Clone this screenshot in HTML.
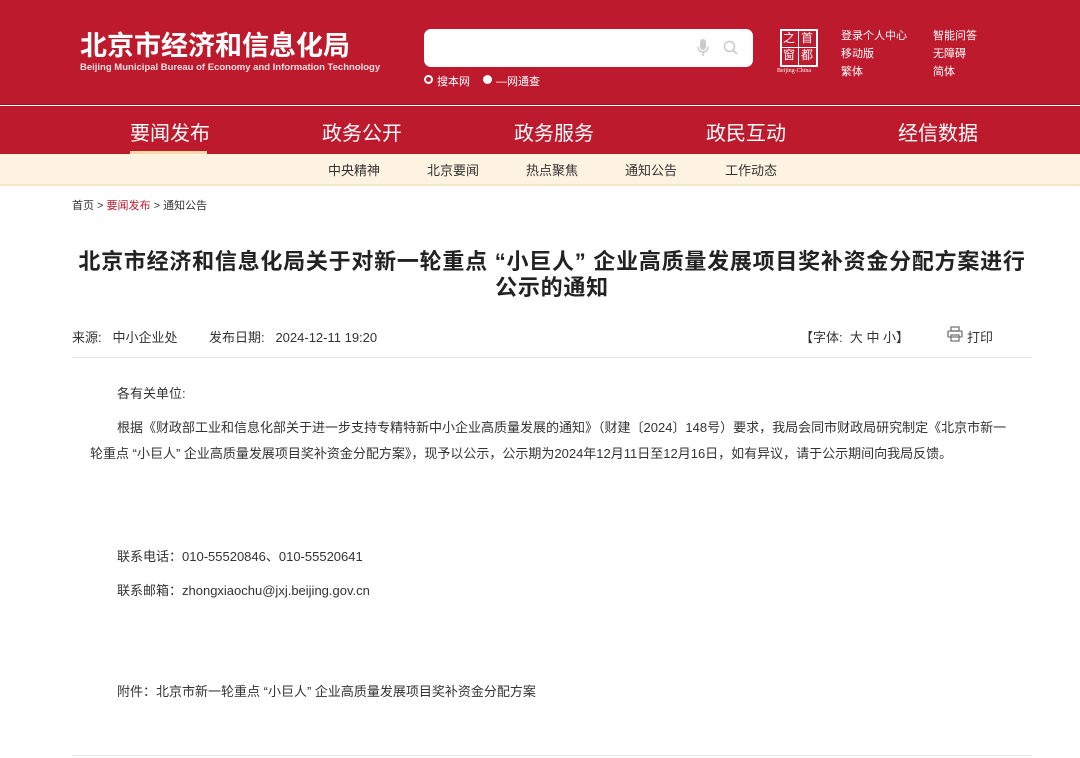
<!DOCTYPE html>
<html><head><meta charset="utf-8">
<style>
*{margin:0;padding:0;box-sizing:border-box}
body{width:1080px;height:758px;overflow:hidden;background:#fff;font-family:"Liberation Sans","Noto Sans CJK SC",sans-serif;color:#333;position:relative}
.hd{position:absolute;left:0;top:0;width:1080px;height:105px;background:#bd1a2d;border-bottom:1px solid #a5121f}
.a{position:absolute;white-space:nowrap}
.nav{position:absolute;left:0;top:106px;width:1080px;height:48px;background:#bd1a2d}
.nav span{position:absolute;top:11px;font-size:20px;color:#fff}
.sub{position:absolute;left:0;top:154px;width:1080px;height:32px;background:#fdf3e0;border-bottom:2px solid #f6e5c7}
.sub span{position:absolute;top:6px;font-size:13px;color:#333}
.p{position:absolute;font-size:13px;color:#333;white-space:nowrap}
</style></head><body>
<div class="hd"></div>
<div class="a" style="left:80px;top:24px;font-size:27px;font-weight:bold;color:#fff">北京市经济和信息化局</div>
<div class="a" style="left:80px;top:62px;font-size:9.5px;font-weight:bold;color:#f3dfe2">Beijing Municipal Bureau of Economy and Information Technology</div>
<div class="a" style="left:424px;top:29px;width:329px;height:38px;background:#fff;border-radius:7px"></div>
<svg class="a" style="left:696px;top:39px" width="14" height="18" viewBox="0 0 14 18"><rect x="4" y="0" width="6" height="11" rx="3" fill="#ccc"/><path d="M2 8a5 5 0 0 0 10 0M7 13v4" stroke="#ccc" stroke-width="1.5" fill="none"/></svg>
<svg class="a" style="left:723px;top:40px" width="16" height="16" viewBox="0 0 16 16"><circle cx="6.5" cy="6.5" r="5" stroke="#ccc" stroke-width="1.6" fill="none"/><path d="M10 10l4 4" stroke="#ccc" stroke-width="1.8"/></svg>
<div class="a" style="left:424px;top:75px;width:9px;height:9px;border:2px solid #fff;border-radius:50%"></div>
<div class="a" style="left:437px;top:73px;font-size:11px;color:#fff">搜本网</div>
<div class="a" style="left:483px;top:75px;width:9px;height:9px;background:#fff;border-radius:50%"></div>
<div class="a" style="left:496px;top:73px;font-size:11px;color:#fff">—网通查</div>
<div class="a" style="left:780px;top:29px;width:38px;height:38px;border:2px solid #fff"></div>
<div class="a" style="left:798px;top:30px;width:1px;height:36px;background:#fff"></div>
<div class="a" style="left:781px;top:47px;width:36px;height:1px;background:#fff"></div>
<div class="a" style="left:783px;top:30px;font-size:12px;color:#fff;line-height:17px">之<br>窗</div>
<div class="a" style="left:801px;top:30px;font-size:12px;color:#fff;line-height:17px">首<br>都</div>
<div class="a" style="left:777px;top:68px;font-size:6px;color:#fff;font-family:'Liberation Serif',serif">Beijing-China</div>
<div class="a" style="left:841px;top:27px;font-size:11px;color:#fff;line-height:18px">登录个人中心<br>移动版<br>繁体</div>
<div class="a" style="left:933px;top:27px;font-size:11px;color:#fff;line-height:18px">智能问答<br>无障碍<br>简体</div>
<div class="nav">
<span style="left:130px">要闻发布</span><span style="left:322px">政务公开</span><span style="left:514px">政务服务</span><span style="left:706px">政民互动</span><span style="left:898px">经信数据</span>
<div class="a" style="left:130px;top:45px;width:77px;height:3px;background:#f6d9a8"></div>
</div>
<div class="sub"><span style="left:328px">中央精神</span><span style="left:427px">北京要闻</span><span style="left:526px">热点聚焦</span><span style="left:625px">通知公告</span><span style="left:725px">工作动态</span></div>
<div class="p" style="left:72px;top:197px;font-size:11px">首页 &gt; <span style="color:#bd1a2d">要闻发布</span> &gt; 通知公告</div>
<div class="a" style="left:52px;top:249px;width:1000px;text-align:center;font-size:22px;letter-spacing:0.75px;font-weight:bold;color:#222;line-height:26px">北京市经济和信息化局关于对新一轮重点 “小巨人” 企业高质量发展项目奖补资金分配方案进行<br>公示的通知</div>
<div class="p" style="left:72px;top:327px">来源:&nbsp;&nbsp;&nbsp;中小企业处</div>
<div class="p" style="left:209px;top:327px">发布日期:&nbsp;&nbsp;&nbsp;2024-12-11 19:20</div>
<div class="p" style="left:800px;top:327px">【字体:&nbsp;&nbsp;大 中 小】</div>
<svg class="a" style="left:947px;top:326px" width="16" height="16" viewBox="0 0 16 16" fill="none" stroke="#777" stroke-width="1.3"><rect x="4" y="1" width="8" height="4"/><rect x="1" y="5" width="14" height="6" rx="1"/><rect x="4" y="9" width="8" height="6"/></svg>
<div class="p" style="left:967px;top:327px">打印</div>
<div class="a" style="left:72px;top:357px;width:960px;height:1px;background:#e5e5e5"></div>
<div class="p" style="left:117px;top:383px">各有关单位:</div>
<div class="p" style="left:117px;top:417px">根据《财政部工业和信息化部关于进一步支持专精特新中小企业高质量发展的通知》（财建〔2024〕148号）要求，我局会同市财政局研究制定《北京市新一</div>
<div class="p" style="left:90px;top:443px">轮重点 “小巨人” 企业高质量发展项目奖补资金分配方案》，现予以公示，公示期为2024年12月11日至12月16日，如有异议，请于公示期间向我局反馈。</div>
<div class="p" style="left:117px;top:546px">联系电话：010-55520846、010-55520641</div>
<div class="p" style="left:117px;top:580px">联系邮箱：zhongxiaochu@jxj.beijing.gov.cn</div>
<div class="p" style="left:117px;top:681px">附件：北京市新一轮重点 “小巨人” 企业高质量发展项目奖补资金分配方案</div>
<div class="a" style="left:72px;top:755px;width:960px;height:1px;background:#e5e5e5"></div>
</body></html>
